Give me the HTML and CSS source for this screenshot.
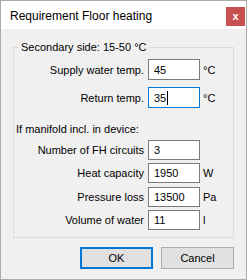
FILE: index.html
```html
<!DOCTYPE html>
<html lang="en">
<head>
  <meta charset="UTF-8">
  <meta name="viewport" content="width=device-width, initial-scale=1.0">
  <title>Requirement Floor heating</title>
  <link rel="stylesheet" href="styles.css">
</head>
<body>
  <div class="dialog">
    <div class="title-bar">
      <span class="title">Requirement Floor heating</span>
      <span class="close">x</span>
    </div>
    <div class="dialog-body">
      <fieldset class="group">
        <legend>Secondary side: 15-50 °C</legend>
        <div class="rows rows-temp">
          <label>Supply water temp.</label>
          <span class="field">45</span>
          <span class="unit">°C</span>
          <label>Return temp.</label>
          <span class="field focused">35<span class="caret"></span></span>
          <span class="unit">°C</span>
        </div>
        <div class="subhead">If manifold incl. in device:</div>
        <div class="rows rows-manifold">
          <label>Number of FH circuits</label>
          <span class="field">3</span>
          <span class="unit"></span>
          <label>Heat capacity</label>
          <span class="field">1950</span>
          <span class="unit">W</span>
          <label>Pressure loss</label>
          <span class="field">13500</span>
          <span class="unit">Pa</span>
          <label>Volume of water</label>
          <span class="field">11</span>
          <span class="unit">l</span>
        </div>
      </fieldset>
      <div class="buttons">
        <button class="btn default">OK</button>
        <button class="btn">Cancel</button>
      </div>
    </div>
  </div>
</body>
</html>
```

FILE: styles.css
```css
body, html {
  margin: 0;
  padding: 0;
  background-color: #f0f0f0;
}

.dialog {
  width: 247px;
  height: 280px;
  box-sizing: border-box;
  border: 1px solid #ababab;
  background-color: #f0f0f0;
  font-family: 'Liberation Sans', Arial, sans-serif;
  font-size: 11px;
  color: #000;
  display: flex;
  flex-direction: column;
}

.title-bar {
  height: 28px;
  background-color: #fff;
  display: flex;
  align-items: flex-start;
  padding-left: 9px;
}

.title {
  font-size: 12px;
  line-height: 16px;
  margin-top: 7px;
}

.close {
  margin-left: auto;
  margin-top: 6px;
  margin-right: 1px;
  width: 19px;
  height: 19px;
  background-color: #c75050;
  color: #fff;
  font-weight: bold;
  font-size: 11px;
  line-height: 18px;
  text-align: center;
}

.dialog-body {
  flex: 1;
  padding: 10px 12px 0 12px;
}

.group {
  margin: 0;
  border: 1px solid #dcdcdc;
  padding: 4px 0 7px 4px;
  min-width: 0;
}

.group legend {
  padding: 0 3px;
  line-height: 16px;
}

.rows {
  display: grid;
  grid-template-columns: 126px 52px auto;
  column-gap: 4px;
  align-items: center;
}

.rows label {
  text-align: right;
}

.rows-temp {
  row-gap: 7px;
}

.rows-temp .field {
  height: 21px;
}

.rows-manifold {
  row-gap: 3.33px;
}

.field {
  box-sizing: border-box;
  height: 20px;
  border: 1px solid #7a7a7a;
  background-color: #fff;
  padding-left: 5px;
  line-height: 18px;
  display: flex;
  align-items: center;
}

.field.focused {
  border-color: #0078d7;
}

.caret {
  width: 1px;
  height: 14px;
  background-color: #000;
  margin-left: 1px;
}

.unit {
  margin-left: -1px;
}

.subhead {
  line-height: 16px;
  margin: 13px 0 3px -2px;
}

.buttons {
  display: flex;
  justify-content: flex-end;
  gap: 8px;
  margin-top: 9px;
}

.btn {
  width: 73px;
  height: 22px;
  margin: 0;
  padding: 0;
  font-family: inherit;
  font-size: 11px;
  color: #000;
  background-color: #e1e1e1;
  border: 1px solid #adadad;
  border-radius: 0;
}

.btn.default {
  border: 2px solid #0078d7;
}
```
